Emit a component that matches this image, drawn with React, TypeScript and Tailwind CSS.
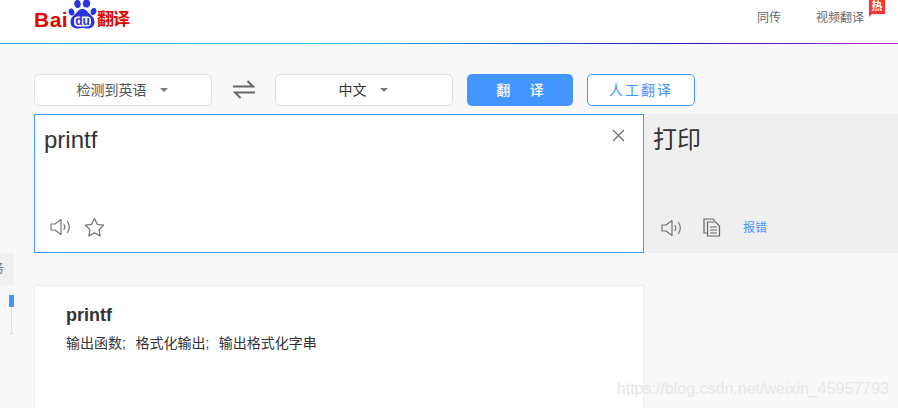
import React from 'react';

const cjk = "font-['Liberation_Sans','Noto_Sans_CJK_SC',sans-serif]";

const Paw = () => (
  <svg width="30" height="30" viewBox="0 0 30 30" className="block">
    <ellipse cx="9.500" cy="4" rx="3.200" ry="4" fill="#2932e1" transform="rotate(-10 9.500 4)" />
    <ellipse cx="18.500" cy="3.500" rx="3.600" ry="4" fill="#2932e1" transform="rotate(10 18.500 3.500)" />
    <ellipse cx="3.500" cy="12" rx="2.800" ry="3.600" fill="#2932e1" transform="rotate(-15 3.500 12)" />
    <ellipse cx="25.500" cy="11.500" rx="2.800" ry="3.600" fill="#2932e1" transform="rotate(15 25.500 11.500)" />
    <path d="M14.500 9c3.400 0 4.800 2.500 6.800 4.600 2.400 2.400 5.200 4.400 5.200 8.400 0 4.400-3.400 6.500-6.800 6.500-2 0-3.500-.6-5.200-.6s-3.200.6-5.200.6c-3.400 0-6.800-2.100-6.800-6.500 0-4 2.800-6 5.200-8.400 2-2.100 3.400-4.600 6.800-4.600z" fill="#2932e1" />
    <rect x="6" y="16.500" width="17" height="10" rx="4" fill="#fff" />
  </svg>
);

const Speaker = () => (
  <svg width="22" height="18" viewBox="0 0 22 18" fill="none" stroke="#777" strokeWidth="1.2" className="block">
    <path d="M1 6h4l6-4.500v15l-6-4.500H1z" strokeLinejoin="round" />
    <path d="M14 6.500c1 1.500 1 3.500 0 5M17.500 3.500c2.200 3.300 2.200 7.700 0 11" strokeLinecap="round" />
  </svg>
);

const Caret = () => <span className="inline-block w-0 h-0 border-x-[4px] border-x-transparent border-t-[4px] border-t-[#777]" />;

const LangSelect = ({ label, className }: { label: string; className: string }) => (
  <div className={`w-[178px] h-[32px] bg-white border border-[#e0e0e0] rounded-[5px] flex items-center justify-center gap-[13px] pr-[2px] text-[14px] ${className}`}>
    <span>{label}</span>
    <Caret />
  </div>
);

export default function App() {
  return (
    <div className={`relative w-[898px] h-[408px] overflow-hidden bg-[#f8f8f8] text-[#333] ${cjk}`}>
      {/* top bar */}
      <header className="h-[43px] bg-white flex items-start justify-between">
        <div className="flex items-start pl-[34px]">
          <span className="w-[34px] mt-[9px] text-[21px] leading-[22px] font-bold text-[#e10601] tracking-[0.5px]">Bai</span>
          <div className="relative">
            <Paw />
            <span className="absolute left-[5px] top-[15px] w-[19px] text-center text-[12px] leading-[12px] font-bold text-[#2932e1]">du</span>
          </div>
          <span className="-ml-[1px] mt-[10px] text-[17px] leading-[20px] font-bold text-[#e10601] tracking-[-1px]">翻译</span>
        </div>
        <nav className="flex items-start pt-[10px] text-[12px] leading-[16px] text-[#666]">
          <span className="mr-[35px]">同传</span>
          <span className="relative mr-[34px]">
            视频翻译
            <span className="absolute -right-[21px] -top-[10px] w-[16px] h-[14px] bg-[#f33] text-white text-[11px] leading-[13px] text-center font-bold">
              热
              <span className="absolute left-0 top-[14px] w-0 h-0 border-r-[3px] border-r-transparent border-t-[3px] border-t-[#f33]" />
            </span>
          </span>
        </nav>
      </header>
      <div className="h-[1px] bg-[linear-gradient(90deg,#1fa6dd,#20d3e3_35%,#2010c0_75%,#c030d0)]" />

      {/* language controls */}
      <div className="flex items-center pl-[34px] pt-[30px]">
        <LangSelect label="检测到英语" className="text-[#555]" />
        <svg width="22" height="20" viewBox="0 0 22 20" fill="none" stroke="#666" strokeWidth="2" className="ml-[21px] mr-[20px]">
          <path d="M0 6.500h20L14.500 1M22 12.500H2l5.500 5.500" />
        </svg>
        <LangSelect label="中文" className="text-[#333]" />
        <button className="ml-[14px] w-[106px] h-[32px] rounded-[5px] bg-[#4395ff] text-white text-[14px] font-medium">翻&nbsp;&nbsp;&nbsp;&nbsp;&nbsp;译</button>
        <button className="ml-[14px] w-[108px] h-[32px] rounded-[5px] bg-white border border-[#4395ff] text-[#4395ff] text-[14px] tracking-[2px]">人工翻译</button>
      </div>

      {/* translate panels */}
      <div className="flex mt-[8px] pl-[34px] h-[139px]">
        <div className="relative w-[610px] bg-white border border-[#4395ff] pl-[9px] pt-[9px]">
          <div className="text-[24px] leading-[32px] text-[#333]">printf</div>
          <svg width="13" height="13" viewBox="0 0 13 13" stroke="#666" strokeWidth="1.1" className="absolute right-[18px] top-[14px]">
            <path d="M1 1l11 11M12 1L1 12" />
          </svg>
          <div className="absolute left-[15px] bottom-[15px] flex items-center gap-[12px]">
            <Speaker />
            <svg width="21" height="20" viewBox="0 0 21 20" fill="none" stroke="#777" strokeWidth="1.3" className="block">
              <path d="M10.500 1.500l2.800 5.800 6.200.9-4.500 4.400 1.100 6.300-5.600-3-5.600 3 1.100-6.300-4.500-4.400 6.200-.9z" strokeLinejoin="round" />
            </svg>
          </div>
        </div>
        <div className="relative w-[254px] bg-[#efefef] pl-[9px] pt-[10px]">
          <div className="text-[24px] leading-[32px] text-[#333]">打印</div>
          <div className="absolute left-[17px] bottom-[16px] flex items-center">
            <Speaker />
            <svg width="18" height="19" viewBox="0 0 18 19" fill="none" stroke="#666" strokeWidth="1.2" className="block ml-[20px]">
              <path d="M4 15H1V1h9l1.500 2" />
              <path d="M4.500 4h8l4 4v10h-12zM7 9h7M7 12h7M7 15h7" />
            </svg>
            <span className="ml-[22px] text-[12px] leading-[16px] text-[#4395ff]">报错</span>
          </div>
        </div>
      </div>

      {/* dictionary card */}
      <div className="ml-[34px] mt-[32px] w-[610px] h-[140px] bg-white border border-[#eeeeee] pl-[31px] pt-[17px]">
        <div className="text-[18px] leading-[24px] font-bold text-[#333]">printf</div>
        <div className="mt-[7px] flex gap-[9.5px] text-[14px] leading-[18px] text-[#333]">
          <span>输出函数;</span>
          <span>格式化输出;</span>
          <span>输出格式化字串</span>
        </div>
      </div>

      {/* side tabs, partly off screen */}
      <div className="absolute left-0 top-[253px] w-[14px] h-[32px] bg-[#f0f0f0] rounded-r-[2px] overflow-hidden flex items-center">
        <span className="-ml-[8px] text-[12px] leading-[14px] text-[#666] whitespace-nowrap">务</span>
      </div>
      <div className="absolute left-[11px] top-[300px] w-[1px] h-[33px] bg-[#e0e0e0]" />
      <div className="absolute left-[9px] top-[333px] w-[5px] h-[1px] bg-[#e0e0e0]" />
      <div className="absolute left-[9px] top-[295px] w-[5px] h-[12px] bg-[#4395ff]" />

      {/* watermark */}
      <div className="absolute right-[9px] bottom-[10px] text-[16px] leading-[18px] text-[#e6e6e6] font-['Liberation_Sans',sans-serif]">https://blog.csdn.net/weixin_45957793</div>
    </div>
  );
}
